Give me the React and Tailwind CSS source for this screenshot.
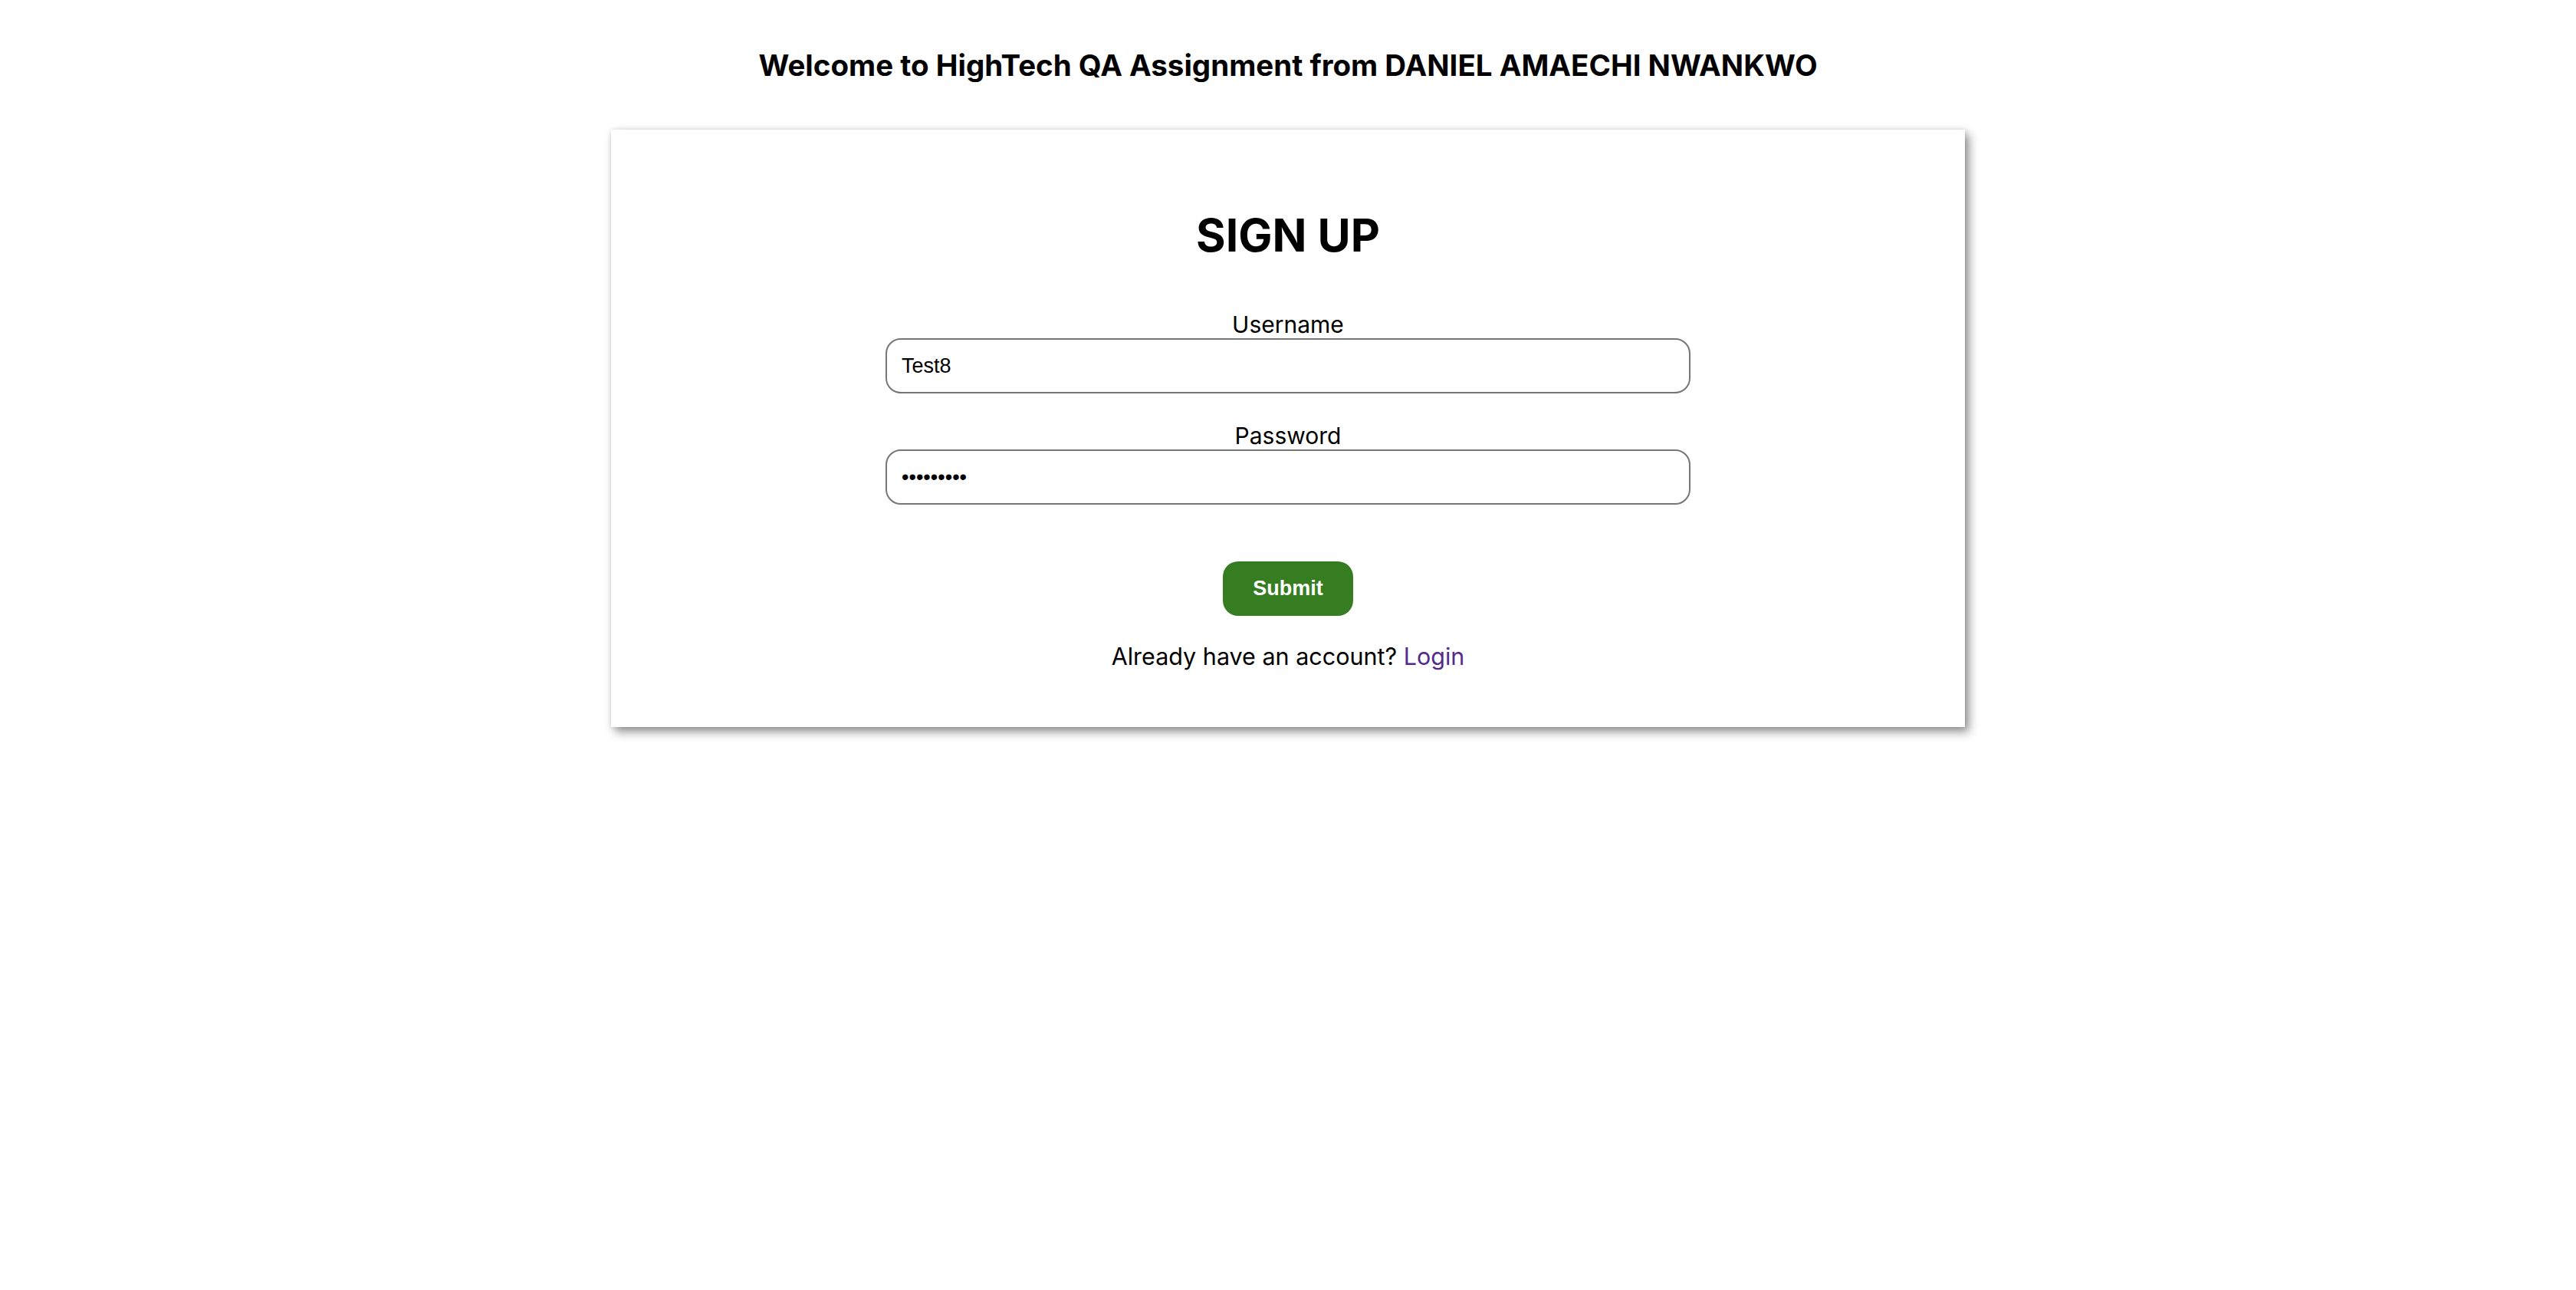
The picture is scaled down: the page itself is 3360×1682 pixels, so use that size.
import { useState } from 'react';

export default function App() {
  const [username, setUsername] = useState('Test8');
  const [password, setPassword] = useState('Test12345');

  return (
    <div className="min-h-[1682px] bg-white pt-[62px] font-['Inter','Noto_Sans',sans-serif] text-black">
      <h3 className="text-center text-[38.5px] leading-[46px] font-bold">
        Welcome to HighTech QA Assignment from DANIEL AMAECHI NWANKWO
      </h3>

      {/* Sign up card */}
      <div className="mx-auto mt-[61px] w-[1766px] bg-white pt-[100px] pb-[72px] shadow-[5px_6px_12px_rgba(0,0,0,0.45),0_0_5px_rgba(0,0,0,0.1)]">
        <form onSubmit={(e) => e.preventDefault()} className="flex flex-col items-center">
          <h1 className="text-[59px] leading-[76px] font-bold">SIGN UP</h1>

          <label htmlFor="username" className="mt-[60px] text-[30px] leading-[36px]">
            Username
          </label>
          <input
            id="username"
            type="text"
            value={username}
            onChange={(e) => setUsername(e.target.value)}
            className="h-[72px] w-[1050px] rounded-[20px] border-2 border-[#767676] px-[19px] font-['Liberation_Sans',Arial,sans-serif] text-[27px] outline-none"
          />

          <label htmlFor="password" className="mt-[37px] text-[30px] leading-[36px]">
            Password
          </label>
          <input
            id="password"
            type="password"
            value={password}
            onChange={(e) => setPassword(e.target.value)}
            className="h-[72px] w-[1050px] rounded-[20px] border-2 border-[#767676] px-[19px] font-['Liberation_Sans',Arial,sans-serif] text-[27px] outline-none"
          />

          <button
            type="submit"
            className="mt-[74px] h-[71px] w-[170px] rounded-[20px] bg-[#367d22] font-['Liberation_Sans',Arial,sans-serif] text-[27px] font-bold text-white"
          >
            Submit
          </button>

          <p className="mt-[33px] text-[30.5px] leading-[40px]">
            Already have an account? <a href="#" className="text-[#552a8b]">Login</a>
          </p>
        </form>
      </div>
    </div>
  );
}
